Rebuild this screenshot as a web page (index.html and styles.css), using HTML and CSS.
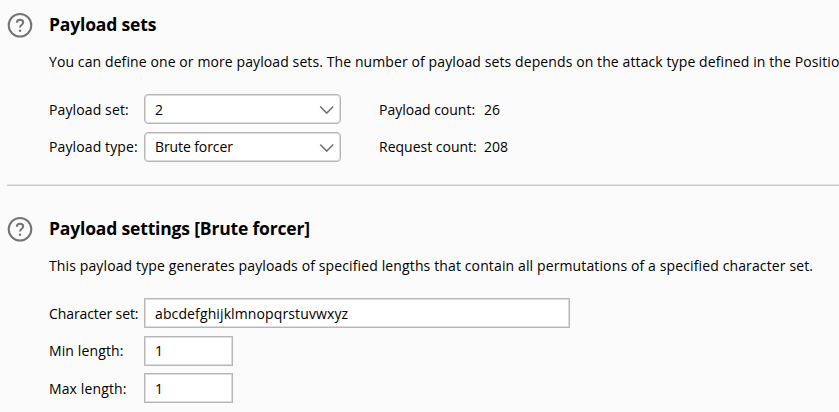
FILE: index.html
```html
<!DOCTYPE html>
<html lang="en">
<head>
<meta charset="utf-8">
<title>Payloads</title>
<link rel="stylesheet" href="styles.css">
</head>
<body>
<section class="panel sets">
  <svg class="help" viewBox="0 0 26 26"><circle cx="13" cy="13.3" r="11.3"/><path d="M9.9 10.8c0-1.8 1.2-3 3.1-3s3.2 1.1 3.2 2.7c0 2.3-3.2 2.3-3.2 5.1"/><circle class="dot" cx="13" cy="18.8" r="1.2"/></svg>
  <div class="content">
    <h2>Payload sets</h2>
    <p class="intro">You can define one or more payload sets. The number of payload sets depends on the attack type defined in the Positio</p>
    <div class="row"><span class="label loose">Payload set:</span><div class="field select"><span>2</span><svg class="chevron" viewBox="0 0 16 10"><path d="M1.2 1.5 7.7 8l6.5-6.5"/></svg></div><span class="count">Payload count:</span><span>26</span></div>
    <div class="row raised"><span class="label loose">Payload type:</span><div class="field select tight"><span>Brute forcer</span><svg class="chevron" viewBox="0 0 16 10"><path d="M1.2 1.5 7.7 8l6.5-6.5"/></svg></div><span class="count">Request count:</span><span>208</span></div>
  </div>
</section>
<section class="panel settings">
  <svg class="help" viewBox="0 0 26 26"><circle cx="13" cy="13.3" r="11.3"/><path d="M9.9 10.8c0-1.8 1.2-3 3.1-3s3.2 1.1 3.2 2.7c0 2.3-3.2 2.3-3.2 5.1"/><circle class="dot" cx="13" cy="18.8" r="1.2"/></svg>
  <div class="content">
    <h2>Payload settings [Brute forcer]</h2>
    <p class="description">This payload type generates payloads of specified lengths that contain all permutations of a specified character set.</p>
    <div class="row"><span class="label tight">Character set:</span><div class="field wide">abcdefghijklmnopqrstuvwxyz</div></div>
    <div class="row raised"><span class="label loose">Min length:</span><div class="field small">1</div></div>
    <div class="row"><span class="label loose">Max length:</span><div class="field small">1</div></div>
  </div>
</section>
</body>
</html>
```
FILE: styles.css
```css
* { box-sizing: border-box; }
body { margin: 0; height: 412px; overflow: hidden; background: #fbfbfb; color: #000; font: 14px/20px "Open Sans", "Noto Sans", sans-serif; white-space: nowrap; }
.panel { display: flex; margin-left: 7px; }
.sets { height: 186px; padding-top: 12px; border-bottom: 1px solid #c9c9c9; box-shadow: inset 0 -1px #e6e6e6; }
.settings { padding-top: 30px; }
.help { flex: none; width: 26px; height: 26px; margin-right: 16px; fill: none; stroke: #747474; stroke-width: 2; }
.dot { fill: #747474; stroke: none; }
h2 { margin: 0; height: 26px; font-size: 17.5px; line-height: 25px; font-weight: 700; letter-spacing: -.17px; }
p { margin: 14px 0 22px; height: 20px; }
.intro { letter-spacing: .1px; }
.description { letter-spacing: .125px; }
.row { display: flex; align-items: center; height: 30px; margin-bottom: 8px; }
.settings .row + .row { margin-bottom: 7px; }
.label { width: 95px; }
.label, .count, .count + span { padding-top: 1px; }
.loose { letter-spacing: .12px; }
.tight { letter-spacing: -.1px; }
.field { height: 30px; padding: 0 10px; border: 1px solid #bab5b6; box-shadow: inset 0 0 0 1px #dedbdc; background: #fff; line-height: 29px; }
.select { display: flex; justify-content: space-between; align-items: center; width: 197px; border-radius: 4px; padding-right: 5px; }
.raised .field { line-height: 27px; }
.raised .select span { padding-bottom: 2px; }
.raised .label, .raised .count, .raised .count + span { padding: 0 0 1px; }
.chevron { width: 16px; height: 10px; margin-top: 2px; fill: none; stroke: #747474; stroke-width: 1.6; }
.count { width: 105px; margin-left: 38px; }
.wide { width: 426px; letter-spacing: .12px; }
.small { width: 89px; }
```
